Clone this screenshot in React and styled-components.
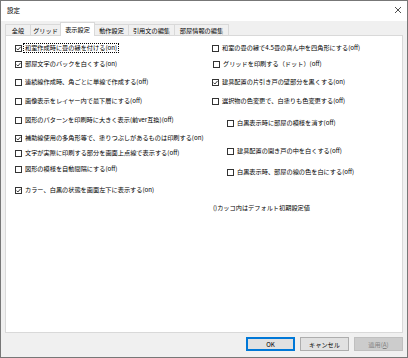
import React from "react";
import styled, { createGlobalStyle } from "styled-components";

const Global = createGlobalStyle`
  html, body { margin: 0; padding: 0; background: #ffffff; }
  * { box-sizing: border-box; }
`;

const font = `"Noto Sans CJK JP", "Noto Sans", sans-serif`;

const Window = styled.div`
  width: 408px;
  height: 358px;
  border: 1px solid #777777;
  display: flex;
  flex-direction: column;
  font-family: ${font};
  font-size: 6.2px;
  color: #000;
  background: #f0f0f0;
`;

const TitleBar = styled.div`
  height: 20px;
  background: #ffffff;
  display: flex;
  align-items: center;
  justify-content: space-between;
  padding: 0 5px 2px 6px;
  font-size: 6.5px;
`;

const CloseIcon = styled.svg`
  width: 8px;
  height: 8px;
`;

const Body = styled.div`
  flex: 1;
  display: flex;
  flex-direction: column;
  padding: 0 4px;
`;

const TabStrip = styled.div`
  height: 14px;
  display: flex;
  align-items: flex-end;
  padding-left: 1px;
`;

const Tab = styled.div`
  width: ${(p) => p.$w}px;
  height: ${(p) => (p.$active ? 14 : 11)}px;
  margin-bottom: ${(p) => (p.$active ? -1 : 0)}px;
  position: relative;
  z-index: ${(p) => (p.$active ? 2 : 1)};
  background: ${(p) => (p.$active ? "#ffffff" : "#f0f0f0")};
  border: 1px solid #d9d9d9;
  border-bottom: none;
  margin-left: -1px;
  display: flex;
  align-items: center;
  justify-content: center;
  padding-bottom: ${(p) => (p.$active ? 1 : 0)}px;
  white-space: nowrap;
`;

const Panel = styled.div`
  flex: 1;
  background: #ffffff;
  border: 1px solid #d9d9d9;
  display: grid;
  grid-template-columns: 197px 1fr;
  align-items: start;
  padding: 8px 0 0 9px;
`;

const Column = styled.div`
  display: flex;
  flex-direction: column;
`;

const Row = styled.div`
  height: 8px;
  display: flex;
  align-items: center;
  gap: 2px;
  margin-top: ${(p) => p.$mt || 0}px;
  padding-left: ${(p) => p.$indent || 0}px;
  white-space: nowrap;
`;

const Label = styled.span`
  line-height: 8px;
  padding: 0 1px;
  outline: ${(p) => (p.$focus ? "1px dotted #000" : "none")};
`;

const Note = styled.div`
  height: 8px;
  line-height: 8px;
  margin-top: ${(p) => p.$mt}px;
  padding-left: 1px;
  white-space: nowrap;
`;

const Box = styled.svg`
  width: 7px;
  height: 7px;
  flex: none;
`;

const Footer = styled.div`
  height: 24px;
  display: flex;
  justify-content: flex-end;
  align-items: flex-start;
  gap: 5px;
  padding-top: 4px;
`;

const Button = styled.div`
  width: 49px;
  height: 14px;
  display: flex;
  align-items: center;
  justify-content: center;
  background: ${(p) => (p.$disabled ? "#cccccc" : "#e1e1e1")};
  border: 1px solid
    ${(p) => (p.$primary ? "#0078d7" : p.$disabled ? "#bfbfbf" : "#adadad")};
  box-shadow: ${(p) => (p.$primary ? "inset 0 0 0 1px #0078d7" : "none")};
  color: ${(p) => (p.$disabled ? "#838383" : "#000")};
`;

const Under = styled.span`
  text-decoration: underline;
`;

function Check({ on }) {
  return (
    <Box viewBox="0 0 7 7">
      <rect x="0.5" y="0.5" width="6" height="6" fill="#fff" stroke="#333" strokeWidth="1" />
      {on && (
        <polyline points="1.5,3.6 2.9,5 5.6,1.9" fill="none" stroke="#222" strokeWidth="0.9" />
      )}
    </Box>
  );
}

const tabs = [
  { t: "全般", w: 26 },
  { t: "グリッド", w: 31 },
  { t: "表示設定", w: 35, active: true },
  { t: "動作設定", w: 35 },
  { t: "引用文の編集", w: 47 },
  { t: "部屋情報の編集", w: 55 },
];

const left = [
  { t: "和室作成時に畳の縁を付ける(on)", on: true, mt: 0, focus: true },
  { t: "部屋文字のバックを白くする(on)", on: true, mt: 8 },
  { t: "連続線作成時、角ごとに単線で作成する(off)", mt: 10 },
  { t: "画像表示をレイヤー内で最下層にする(off)", mt: 11 },
  { t: "図形のパターンを印刷時に大きく表示(前ver互換)(off)", mt: 11 },
  { t: "補助線使用の多角形等で、塗りつぶしがあるものは印刷する(on)", on: true, mt: 10 },
  { t: "文字が実際に印刷する部分を画面上点線で表示する(off)", mt: 7 },
  { t: "図形の模様を自動間隔にする(off)", mt: 8 },
  { t: "カラー、白黒の状態を画面左下に表示する(on)", on: true, mt: 13 },
];

const right = [
  { t: "和室の畳の縁で4.5畳の真ん中を四角形にする(off)", mt: 0 },
  { t: "グリッドを印刷する（ドット）(off)", mt: 8, indent: 1 },
  { t: "建具配置の片引き戸の壁部分を黒くする(on)", on: true, mt: 10 },
  { t: "選択物の色変更で、白塗りも色変更する(off)", mt: 11 },
  { t: "白黒表示時に部屋の模様を消す(off)", mt: 14, indent: 15 },
  { t: "建具配置の開き戸の中を白くする(off)", mt: 20, indent: 15 },
  { t: "白黒表示時、部屋の線の色を白にする(off)", mt: 13, indent: 15 },
];

export default function App() {
  return (
    <>
      <Global />
      <Window>
        <TitleBar>
          <span>設定</span>
          <CloseIcon viewBox="0 0 8 8">
            <path d="M1 1 L7 7 M7 1 L1 7" stroke="#222" strokeWidth="0.8" />
          </CloseIcon>
        </TitleBar>
        <Body>
          <TabStrip>
            {tabs.map((tab) => (
              <Tab key={tab.t} $w={tab.w} $active={tab.active}>
                {tab.t}
              </Tab>
            ))}
          </TabStrip>
          <Panel>
            <Column>
              {left.map((r) => (
                <Row key={r.t} $mt={r.mt}>
                  <Check on={r.on} />
                  <Label $focus={r.focus}>{r.t}</Label>
                </Row>
              ))}
            </Column>
            <Column>
              {right.map((r) => (
                <Row key={r.t} $mt={r.mt} $indent={r.indent}>
                  <Check on={r.on} />
                  <Label>{r.t}</Label>
                </Row>
              ))}
              <Note $mt={28}>()カッコ内はデフォルト初期設定値</Note>
            </Column>
          </Panel>
          <Footer>
            <Button $primary>OK</Button>
            <Button>キャンセル</Button>
            <Button $disabled>
              適用(<Under>A</Under>)
            </Button>
          </Footer>
        </Body>
      </Window>
    </>
  );
}
